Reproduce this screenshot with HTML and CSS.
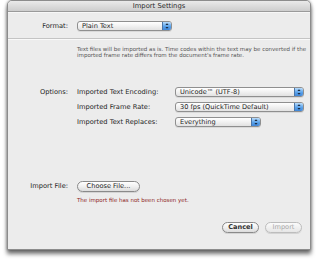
FILE: index.html
```html
<!DOCTYPE html>
<html>
<head>
<meta charset="utf-8">
<link rel="stylesheet" href="styles.css">
</head>
<body>
<div class="window">
  <div class="titlebar">Import Settings</div>
  <div class="content">
    <div class="row format-row">
      <div class="label">Format:</div>
      <div class="popup p-format"><span class="ptext">Plain Text</span><span class="stepper"><svg width="9" height="8" viewBox="0 0 9 8"><path d="M4.5 1 L6.3 3 L2.7 3 Z M4.5 7 L6.3 5 L2.7 5 Z" fill="#1b2a40"/></svg></span></div>
    </div>
    <div class="sep"></div>
    <p class="desc">Text files will be imported as is. Time codes within the text may be converted if the imported frame rate differs from the document's frame rate.</p>
    <div class="options">
      <div class="label">Options:</div>
      <div class="opt-grid">
        <div class="sublabel">Imported Text Encoding:</div>
        <div class="popup p-wide"><span class="ptext">Unicode™ (UTF-8)</span><span class="stepper"><svg width="9" height="8" viewBox="0 0 9 8"><path d="M4.5 1 L6.3 3 L2.7 3 Z M4.5 7 L6.3 5 L2.7 5 Z" fill="#1b2a40"/></svg></span></div>
        <div class="sublabel">Imported Frame Rate:</div>
        <div class="popup p-wide"><span class="ptext">30 fps (QuickTime Default)</span><span class="stepper"><svg width="9" height="8" viewBox="0 0 9 8"><path d="M4.5 1 L6.3 3 L2.7 3 Z M4.5 7 L6.3 5 L2.7 5 Z" fill="#1b2a40"/></svg></span></div>
        <div class="sublabel">Imported Text Replaces:</div>
        <div class="popup p-short"><span class="ptext">Everything</span><span class="stepper"><svg width="9" height="8" viewBox="0 0 9 8"><path d="M4.5 1 L6.3 3 L2.7 3 Z M4.5 7 L6.3 5 L2.7 5 Z" fill="#1b2a40"/></svg></span></div>
      </div>
    </div>
    <div class="row file-row">
      <div class="label">Import File:</div>
      <div class="btn btn-choose">Choose File...</div>
    </div>
    <p class="warn">The import file has not been chosen yet.</p>
    <div class="footer">
      <div class="btn btn-cancel">Cancel</div>
      <div class="btn btn-import">Import</div>
    </div>
  </div>
</div>
</body>
</html>
```
FILE: styles.css
```css
* { box-sizing: border-box; }
html, body { margin: 0; padding: 0; }
body {
  width: 320px;
  height: 261px;
  background: #ffffff;
  font-family: "DejaVu Sans", "Liberation Sans", sans-serif;
  color: #1e1e1e;
  overflow: hidden;
}
.window {
  margin-left: 7px;
  width: 304px;
  height: 250px;
  border: 1px solid #8c8c8c;
  border-radius: 5px 5px 0 0;
  background: #ececec;
  box-shadow: 0 4px 4px rgba(0,0,0,0.55), 0 0 3px rgba(0,0,0,0.35);
  display: flex;
  flex-direction: column;
  overflow: hidden;
}
.titlebar {
  height: 11px;
  flex: none;
  background: linear-gradient(#eaeaea, #cdcdcd);
  border-bottom: 1px solid #9a9a9a;
  font-size: 6.8px;
  line-height: 10px;
  text-align: center;
  color: #2a2a2a;
}
.content {
  flex: 1;
  display: flex;
  flex-direction: column;
  border-top: 1px solid #f7f7f7;
}
.row {
  display: flex;
  align-items: center;
}
.label {
  width: 60px;
  flex: none;
  text-align: right;
  font-size: 6.7px;
  margin-right: 9px;
  white-space: nowrap;
}
.format-row {
  margin-top: 8px;
  height: 10px;
}
.popup {
  height: 10px;
  border: 1px solid #8f8f8f;
  border-radius: 3px;
  background: linear-gradient(#ffffff, #f1f1f1 50%, #e2e2e2);
  box-shadow: 0 1px 0 rgba(0,0,0,0.08);
  display: flex;
  align-items: stretch;
  overflow: hidden;
}
.ptext {
  flex: 1;
  font-size: 6.6px;
  line-height: 8px;
  padding-left: 4px;
  white-space: nowrap;
}
.stepper {
  width: 9px;
  flex: none;
  background: linear-gradient(#b9dcfb, #5aa2ea 55%, #3f86d8);
  border-left: 1px solid #4b76a8;
  display: flex;
  align-items: center;
  justify-content: center;
}
.stepper svg { display: block; }
.p-format { width: 95px; }
.p-wide { width: 129px; }
.p-short { width: 86px; }
.sep {
  margin-top: 7px;
  height: 2px;
  border-top: 1px solid #c4c4c4;
  border-bottom: 1px solid #f9f9f9;
}
.desc {
  margin: 6px 0 0 69px;
  width: 232px;
  font-size: 5.5px;
  line-height: 6.4px;
  color: #555555;
}
.options {
  display: flex;
  margin-top: 28px;
}
.options .label {
  line-height: 10px;
}
.opt-grid {
  display: grid;
  grid-template-columns: 98px auto;
  row-gap: 5px;
  align-items: center;
}
.sublabel {
  font-size: 6.7px;
  line-height: 10px;
  white-space: nowrap;
}
.file-row {
  margin-top: 54px;
}
.btn {
  height: 11px;
  border: 1px solid #8a8a8a;
  border-radius: 6px;
  background: linear-gradient(#ffffff, #f0f0f0 50%, #dcdcdc);
  font-size: 6.6px;
  line-height: 9px;
  text-align: center;
  box-shadow: 0 1px 0 rgba(0,0,0,0.1);
}
.btn-choose { width: 63px; }
.warn {
  margin: 5px 0 0 69px;
  font-size: 5.5px;
  line-height: 7px;
  color: #8e1f24;
}
.footer {
  display: flex;
  justify-content: flex-end;
  gap: 6px;
  margin-top: 18px;
  padding-right: 8px;
}
.btn-cancel { width: 37px; font-weight: bold; color: #333; }
.btn-import { width: 37px; color: #a8a8a8; border-color: #bdbdbd; background: linear-gradient(#fbfbfb, #f0f0f0 50%, #e6e6e6); }
```
